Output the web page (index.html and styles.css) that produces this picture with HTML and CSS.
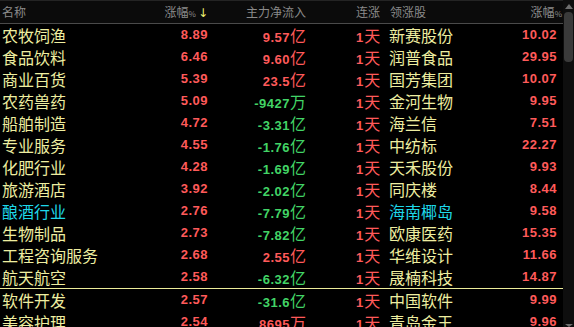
FILE: index.html
```html
<!DOCTYPE html>
<html lang="zh">
<head>
<meta charset="utf-8">
<link rel="stylesheet" href="styles.css">
</head>
<body>
<div class="panel">
  <div class="table">
    <div class="row head">
      <div class="c name">名称</div>
      <div class="c num">涨幅<span class="pct">%</span><span class="arrow">↓</span></div>
      <div class="c num">主力净流入</div>
      <div class="c streak">连涨</div>
      <div class="c leader">领涨股</div>
      <div class="c num last">涨幅<span class="pct">%</span></div>
    </div>
    <div class="row"><div class="c name">农牧饲渔</div><div class="c num up">8.89</div><div class="c num up">9.57<span class="u">亿</span></div><div class="c streak">1<span class="u">天</span></div><div class="c leader">新赛股份</div><div class="c num up">10.02</div></div>
    <div class="row"><div class="c name">食品饮料</div><div class="c num up">6.46</div><div class="c num up">9.60<span class="u">亿</span></div><div class="c streak">1<span class="u">天</span></div><div class="c leader">润普食品</div><div class="c num up">29.95</div></div>
    <div class="row"><div class="c name">商业百货</div><div class="c num up">5.39</div><div class="c num up">23.5<span class="u">亿</span></div><div class="c streak">1<span class="u">天</span></div><div class="c leader">国芳集团</div><div class="c num up">10.07</div></div>
    <div class="row"><div class="c name">农药兽药</div><div class="c num up">5.09</div><div class="c num down">-9427<span class="u">万</span></div><div class="c streak">1<span class="u">天</span></div><div class="c leader">金河生物</div><div class="c num up">9.95</div></div>
    <div class="row"><div class="c name">船舶制造</div><div class="c num up">4.72</div><div class="c num down">-3.31<span class="u">亿</span></div><div class="c streak">1<span class="u">天</span></div><div class="c leader">海兰信</div><div class="c num up">7.51</div></div>
    <div class="row"><div class="c name">专业服务</div><div class="c num up">4.55</div><div class="c num down">-1.76<span class="u">亿</span></div><div class="c streak">1<span class="u">天</span></div><div class="c leader">中纺标</div><div class="c num up">22.27</div></div>
    <div class="row"><div class="c name">化肥行业</div><div class="c num up">4.28</div><div class="c num down">-1.69<span class="u">亿</span></div><div class="c streak">1<span class="u">天</span></div><div class="c leader">天禾股份</div><div class="c num up">9.93</div></div>
    <div class="row"><div class="c name">旅游酒店</div><div class="c num up">3.92</div><div class="c num down">-2.02<span class="u">亿</span></div><div class="c streak">1<span class="u">天</span></div><div class="c leader">同庆楼</div><div class="c num up">8.44</div></div>
    <div class="row"><div class="c name hl">酿酒行业</div><div class="c num up">2.76</div><div class="c num down">-7.79<span class="u">亿</span></div><div class="c streak">1<span class="u">天</span></div><div class="c leader hl">海南椰岛</div><div class="c num up">9.58</div></div>
    <div class="row"><div class="c name">生物制品</div><div class="c num up">2.73</div><div class="c num down">-7.82<span class="u">亿</span></div><div class="c streak">1<span class="u">天</span></div><div class="c leader">欧康医药</div><div class="c num up">15.35</div></div>
    <div class="row"><div class="c name">工程咨询服务</div><div class="c num up">2.68</div><div class="c num up">2.55<span class="u">亿</span></div><div class="c streak">1<span class="u">天</span></div><div class="c leader">华维设计</div><div class="c num up">11.66</div></div>
    <div class="row"><div class="c name">航天航空</div><div class="c num up">2.58</div><div class="c num down">-6.32<span class="u">亿</span></div><div class="c streak">1<span class="u">天</span></div><div class="c leader">晟楠科技</div><div class="c num up">14.87</div></div>
    <div class="divider"></div>
    <div class="row"><div class="c name">软件开发</div><div class="c num up">2.57</div><div class="c num down">-31.6<span class="u">亿</span></div><div class="c streak">1<span class="u">天</span></div><div class="c leader">中国软件</div><div class="c num up">9.99</div></div>
    <div class="row"><div class="c name">美容护理</div><div class="c num up">2.54</div><div class="c num up">8695<span class="u">万</span></div><div class="c streak">1<span class="u">天</span></div><div class="c leader">青岛金王</div><div class="c num up">9.96</div></div>
  </div>
  <div class="scrollbar">
    <div class="sb-up"></div>
    <div class="sb-thumb"></div>
    <div class="sb-track"></div>
    <div class="sb-down"></div>
  </div>
</div>
</body>
</html>
```
FILE: styles.css
```css
html, body {
  margin: 0;
  padding: 0;
  background: #000;
  overflow: hidden;
}
.panel {
  display: flex;
  width: 574px;
  height: 327px;
  overflow: hidden;
}
.table {
  width: 563px;
  flex: none;
}
.row {
  display: grid;
  grid-template-columns: 128px 78px 98px 83px 111px 57px;
  padding-left: 2px;
  height: 22px;
  line-height: 22px;
  font-family: "Noto Sans CJK SC", sans-serif;
  font-size: 16px;
  color: #eeeea0;
  white-space: nowrap;
}
.row.head {
  height: 22px;
  line-height: 22px;
  background: #0b0b0b;
  border-top: 1px solid #242424;
  border-bottom: 1px solid #4a4a4a;
  font-size: 12px;
  color: #8a8a8a;
  margin-bottom: 0;
}
.head .c { color: #8a8a8a; }
.head .pct { font-size: 8px; }
.head .arrow {
  color: #eeee70;
  font-family: "DejaVu Sans", sans-serif;
  font-size: 12px;
  margin-left: 2px;
}
.head .last { margin-right: -5px; }
.c { overflow: visible; }
.num {
  text-align: right;
  font-family: "Liberation Sans", Arial, sans-serif;
  font-weight: bold;
  font-size: 13px;
  letter-spacing: 0.5px;
}
.head .num {
  font-family: "Noto Sans CJK SC", sans-serif;
  font-weight: normal;
  font-size: 12px;
  letter-spacing: 0;
}
.u {
  font-family: "Noto Sans CJK SC", sans-serif;
  font-weight: normal;
  font-size: 16px;
  letter-spacing: 0;
}
.up { color: #ff5a5a; }
.down { color: #42d466; }
.streak {
  padding-left: 50px;
  color: #ff5a5a;
  font-family: "Liberation Sans", Arial, sans-serif;
  font-weight: bold;
  font-size: 13px;
}
.head .streak {
  font-family: "Noto Sans CJK SC", sans-serif;
  font-weight: normal;
  font-size: 12px;
}
.streak .u { margin-left: 1px; }
.leader { padding-left: 0; }
.head .leader { padding-left: 1px; }
.hl { color: #1ed8ea; }
.divider {
  height: 1px;
  background: #ecec9a;
}
.scrollbar {
  width: 11px;
  flex: none;
  background: #0e0e0e;
  display: flex;
  flex-direction: column;
  align-items: center;
}
.sb-up {
  margin-top: 4px;
  width: 0;
  height: 0;
  border-left: 4px solid transparent;
  border-right: 4px solid transparent;
  border-bottom: 5px solid #6e6e6e;
}
.sb-thumb {
  margin-top: 3px;
  width: 9px;
  height: 50px;
  border-radius: 4px;
  background: #3a3a3a;
}
.sb-track { flex: 1; }
.sb-down {
  margin-bottom: 0;
  width: 0;
  height: 0;
  border-left: 4px solid transparent;
  border-right: 4px solid transparent;
  border-top: 3px solid #6e6e6e;
}
```
